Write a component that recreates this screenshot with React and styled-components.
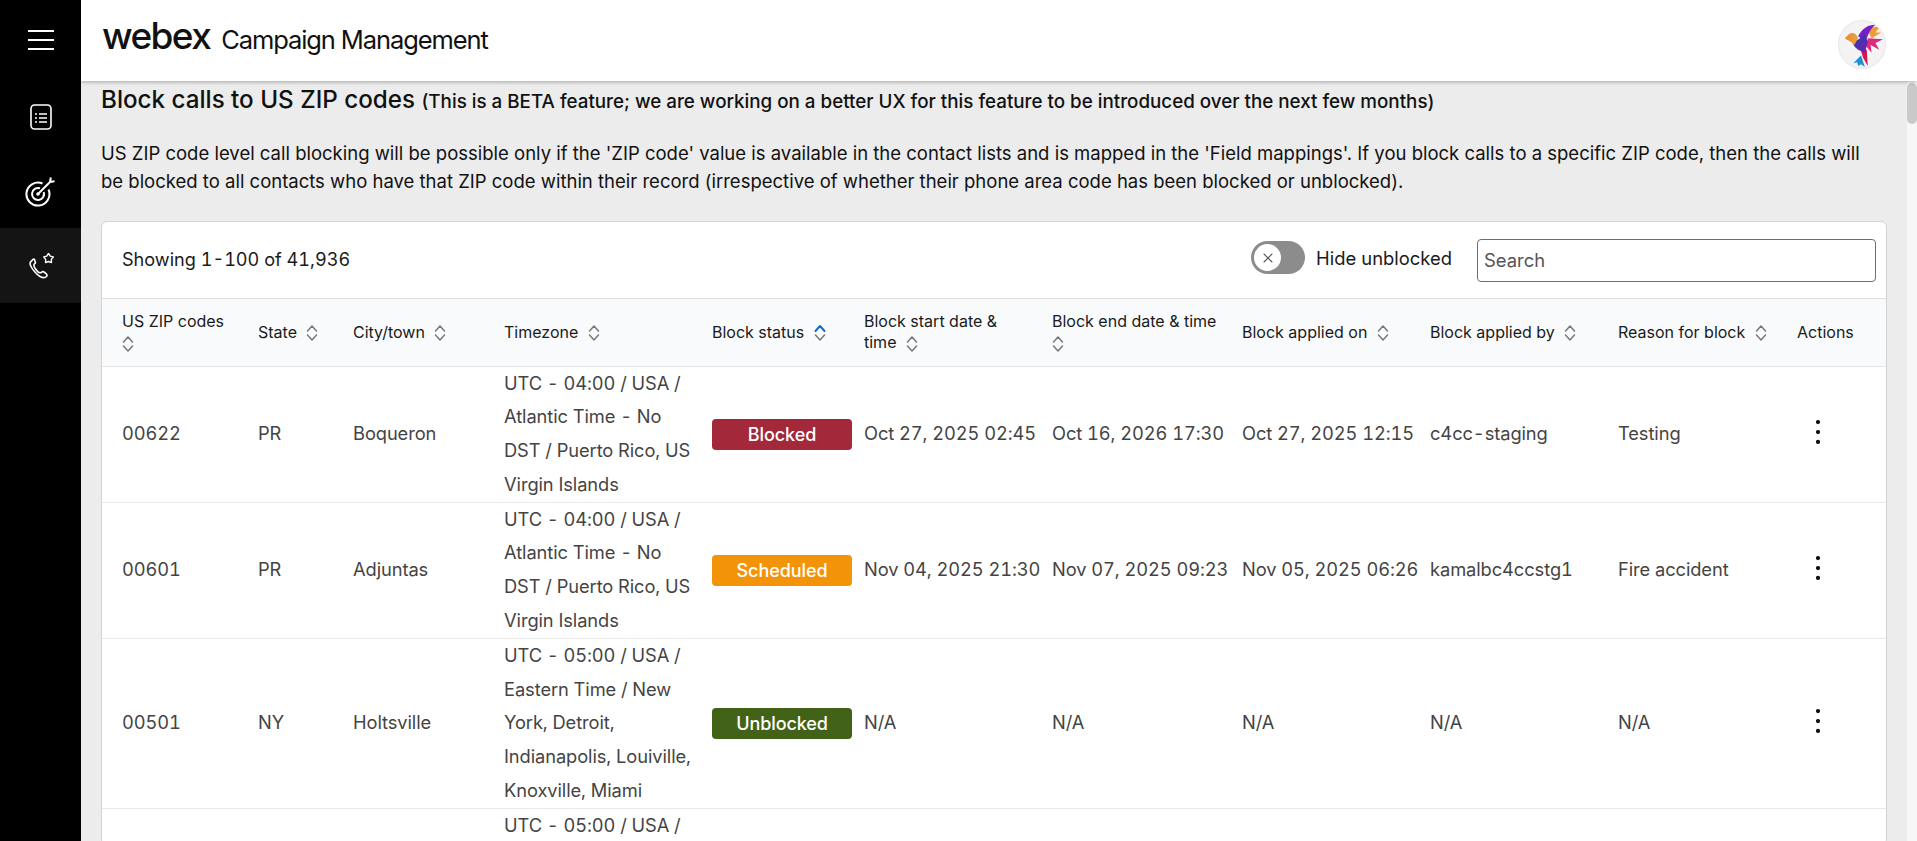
import React from 'react'
import styled, { createGlobalStyle } from 'styled-components'
import { EllipsisVertical, X } from 'lucide-react'

const GlobalStyle = createGlobalStyle`
  html, body { margin: 0; height: 100%; overflow: hidden; }
  body { font-family: Inter, "Noto Sans", sans-serif; color: #1a1a1a; }
  * { box-sizing: border-box; }
`

//#region styles
const Shell = styled.div`
  display: flex;
  height: 841px;
`
const Sidebar = styled.nav`
  width: 81px;
  flex-shrink: 0;
  background: #000;
  display: flex;
  flex-direction: column;
`
const NavItem = styled.div`
  height: ${(p) => p.$height}px;
  display: flex;
  align-items: center;
  justify-content: center;
  background: ${(p) => (p.$active ? '#141414' : 'transparent')};
`
const Column = styled.div`
  flex: 1;
  min-width: 0;
  display: flex;
  flex-direction: column;
`
const Header = styled.header`
  height: 81px;
  flex-shrink: 0;
  background: #fff;
  display: flex;
  align-items: center;
  justify-content: space-between;
  padding: 0 31px 0 21px;
  box-shadow: 0 1px 4px rgba(0, 0, 0, 0.3);
  position: relative;
  z-index: 1;
`
const Brand = styled.div`
  display: flex;
  align-items: baseline;
  gap: 11px;
  color: #111;
  margin-bottom: 10px;
`
const Logo = styled.span`
  font-size: 37px;
  font-weight: 500;
  letter-spacing: -1.6px;
`
const AppName = styled.span`
  font-size: 25.5px;
  font-weight: 400;
  letter-spacing: -1.1px;
`
const Avatar = styled.div`
  width: 48px;
  height: 49px;
  margin-top: 7px;
  border-radius: 50%;
  background: #f3f3f4;
  border: 1px solid #e8e8e8;
  overflow: hidden;
`
const Main = styled.main`
  flex: 1;
  position: relative;
  overflow: hidden;
  background: #ececec;
  padding: 4px 30px 0 20px;
`
const ScrollTrack = styled.div`
  position: absolute;
  top: 0;
  right: 0;
  bottom: 0;
  width: 10px;
  background: #f7f7f7;
`
const ScrollThumb = styled.div`
  height: 41px;
  margin-top: 2px;
  border-radius: 5px;
  background: #c9c9c9;
`
const Title = styled.h1`
  margin: 0;
  font-size: 24.2px;
  font-weight: 500;
  line-height: 30px;
  color: #111;
`
const TitleNote = styled.span`
  font-size: 18.8px;
  font-weight: 500;
`
const Intro = styled.p`
  margin: 22px 0 26px;
  font-size: 18.5px;
  line-height: 28px;
  color: #111;
`
const Card = styled.section`
  background: #fff;
  border: 1px solid #d4d4d4;
  border-radius: 6px;
`
const Toolbar = styled.div`
  height: 77px;
  display: flex;
  align-items: center;
  padding: 0 10px 0 20px;
  border-bottom: 1px solid #dedede;
`
const Showing = styled.div`
  flex: 1;
  font-size: 18.1px;
  font-variant-numeric: tabular-nums;
  margin-bottom: 2px;
`
const ToggleLabel = styled.span`
  font-size: 18.4px;
  margin: 0 25px 5px 11px;
`
const Toggle = styled.div`
  width: 54px;
  height: 33px;
  border-radius: 17px;
  background: #8c8c8c;
  padding: 3px;
  margin-bottom: 5px;
`
const Knob = styled.div`
  width: 27px;
  height: 27px;
  border-radius: 50%;
  background: #fff;
  display: flex;
  align-items: center;
  justify-content: center;
  color: #555;
`
const Search = styled.input`
  width: 399px;
  height: 43px;
  border: 1px solid #6e6e6e;
  border-radius: 4px;
  padding: 0 6px;
  font: 400 18.4px Inter, sans-serif;
  outline: none;
  &::placeholder { color: #555; }
`
const Table = styled.table`
  width: 100%;
  table-layout: fixed;
  border-collapse: collapse;
`
const Th = styled.th`
  background: #f9fafc;
  height: 67px;
  padding: 0 14px 0 6px;
  text-align: left;
  font-size: 16px;
  font-weight: 400;
  line-height: 21px;
  color: #1a1a1a;
  border-bottom: 1px solid #e6e6e6;
  &:first-child { padding-left: 20px; }
`
const Td = styled.td`
  padding: 0 6px;
  font-size: 18.3px;
  letter-spacing: -0.08px;
  line-height: 33.8px;
  color: #444;
  font-variant-numeric: tabular-nums;
  white-space: ${(p) => (p.$wrap ? 'normal' : 'nowrap')};
  border-bottom: 1px solid #e9e9e9;
  vertical-align: middle;
  &:first-child { padding-left: 20px; }
`
/* the space hangs when the icon wraps, so a wrapped icon starts at the cell edge */
const SortGap = styled.span`
  word-spacing: 5px;
`
const SortIcon = styled.svg`
  display: inline-block;
  vertical-align: middle;
`
const Badge = styled.div`
  width: 140px;
  height: 31px;
  border-radius: 4px;
  background: ${(p) => p.$color};
  color: #fff;
  font-size: 18px;
  font-weight: 500;
  line-height: 31px;
  text-align: center;
`
const Kebab = styled.div`
  display: flex;
  padding-left: 4px;
  margin-bottom: 4px;
  color: #111;
`
//#endregion

const widths = [150, 95, 151, 208, 152, 188, 190, 188, 188, 179, 95]

const columns = [
  'US ZIP codes',
  'State',
  'City/town',
  'Timezone',
  'Block status',
  'Block start date & time',
  'Block end date & time',
  'Block applied on',
  'Block applied by',
  'Reason for block',
  'Actions',
]

const atlantic = 'UTC - 04:00 / USA / Atlantic Time - No DST / Puerto Rico, US Virgin Islands'
const eastern = 'UTC - 05:00 / USA / Eastern Time / New York, Detroit, Indianapolis, Louiville, Knoxville, Miami'

const statusColors = { Blocked: '#a2283a', Scheduled: '#f39408', Unblocked: '#426317' }

const rows = [
  ['00622', 'PR', 'Boqueron', atlantic, 'Blocked', 'Oct 27, 2025 02:45', 'Oct 16, 2026 17:30', 'Oct 27, 2025 12:15', 'c4cc-staging', 'Testing'],
  ['00601', 'PR', 'Adjuntas', atlantic, 'Scheduled', 'Nov 04, 2025 21:30', 'Nov 07, 2025 09:23', 'Nov 05, 2025 06:26', 'kamalbc4ccstg1', 'Fire accident'],
  ['00501', 'NY', 'Holtsville', eastern, 'Unblocked', 'N/A', 'N/A', 'N/A', 'N/A', 'N/A'],
]

function Sort({ active }) {
  return (
    <SortIcon width="12" height="18" viewBox="0 0 12 18" fill="none" strokeWidth="1.5" strokeLinecap="round" strokeLinejoin="round">
      <path d="M1.5 7L6 2l4.500 5" stroke={active ? '#0a6fd0' : '#777'} strokeWidth={active ? 2 : 1.5} />
      <path d="M1.5 11L6 16l4.500-5" stroke="#777" />
    </SortIcon>
  )
}

function Bird() {
  return (
    <svg width="46" height="47" viewBox="0 0 48 49">
      <defs>
        <linearGradient id="birdBody" x1="0" y1="0" x2="1" y2="1">
          <stop offset="0" stopColor="#1f3fb5" />
          <stop offset="1" stopColor="#7a1fa8" />
        </linearGradient>
        <linearGradient id="birdHead" x1="0" y1="0" x2="1" y2="0">
          <stop offset="0" stopColor="#f0882a" />
          <stop offset="1" stopColor="#e8a24a" />
        </linearGradient>
      </defs>
      <path d="M30 10C34 6 39 5 42 7L38 12L44 12L34 18Z" fill="#f09a3a" />
      <path d="M30 18L46 19L38 23L42 30L33 25L34 33L28 26Z" fill="#e0287d" />
      <path d="M20 16C24 8 30 4 38 4C33 8 30 14 28 22Z" fill="#7a1fc4" />
      <path d="M23 36L27 48L23 45L20 47L19 43L15 44L19 40Z" fill="#1f8fd0" />
      <path d="M22 28L29 30L30 47L25 38Z" fill="#d5174f" />
      <path d="M14 20C18 22 24 18 26 12L30 22L27 33L20 30C16 27 14 24 14 20Z" fill="url(#birdBody)" />
      <path d="M6 18L10 14C14 11 18 13 20 18L16 25C13 22 10 20 9 20Z" fill="url(#birdHead)" />
    </svg>
  )
}

function App() {
  return (
    <Shell>
      <GlobalStyle />
      <Sidebar>
        <NavItem $height={79}>
          <svg width="26" height="22" viewBox="0 0 26 22" fill="none" stroke="#fff" strokeWidth="2">
            <path d="M0 2h26M0 11h26M0 20h26" />
          </svg>
        </NavItem>
        <NavItem $height={75}>
          <svg width="22" height="26" viewBox="0 0 22 26" fill="none" stroke="#fff">
            <rect x="1" y="1" width="20" height="24" rx="3.5" strokeWidth="1.6" />
            <path d="M5 10h2M9 10h8M5 14h2M9 14h8M5 18h2M9 18h8" strokeWidth="1.6" />
          </svg>
        </NavItem>
        <NavItem $height={74}>
          <svg width="32" height="32" viewBox="0 0 32 32" fill="none" stroke="#fff" strokeWidth="2">
            <path d="M23.500 14.500A11.500 11.500 0 1 1 17.500 8.500" />
            <path d="M18.700 17A6 6 0 1 1 15 13.300" />
            <path d="M13 19L26 6" />
            <path d="M25 7l.8-4.500M25 7l4.500-.8" />
            <circle cx="13" cy="19" r="1.800" fill="#fff" stroke="none" />
          </svg>
        </NavItem>
        <NavItem $height={75} $active>
          <svg width="26" height="26" viewBox="0 0 26 26" fill="none" stroke="#fff" strokeWidth="1.6">
            <path d="M4 7.500c-2 1-2.500 3-1 6s6 8.500 9 10 5 1.500 6.500 0c1-1 .5-2-.5-3l-2-1.500c-1-.7-2-.3-3 .7-1.500.5-4-1.500-6-4.500-1.200-2-1.500-3.500-.5-4.500 1-.5 1-1.700.5-2.700L6.500 6.500c-.7-.7-1.500-.5-2.500 1z" />
            <path d="M20.500 .5L22.260 3.070 25.260 3.950 23.350 6.430 23.440 9.550 20.500 8.500 17.560 9.550 17.650 6.430 15.740 3.950 18.740 3.070Z" strokeWidth="1.400" strokeLinejoin="round" />
          </svg>
        </NavItem>
      </Sidebar>
      <Column>
        <Header>
          <Brand>
            <Logo>webex</Logo>
            <AppName>Campaign Management</AppName>
          </Brand>
          <Avatar>
            <Bird />
          </Avatar>
        </Header>
        <Main>
          <ScrollTrack>
            <ScrollThumb />
          </ScrollTrack>
          <Title>
            Block calls to US ZIP codes{' '}
            <TitleNote>
              (This is a BETA feature; we are working on a better UX for this feature to be introduced over the next few months)
            </TitleNote>
          </Title>
          <Intro>
            US ZIP code level call blocking will be possible only if the 'ZIP code' value is available in the contact lists and is mapped in the 'Field mappings'. If you block calls to a specific ZIP code, then the calls will be blocked to all contacts who have that ZIP code within their record (irrespective of whether their phone area code has been blocked or unblocked).
          </Intro>
          <Card>
            <Toolbar>
              <Showing>Showing 1-100 of 41,936</Showing>
              <Toggle>
                <Knob>
                  <X size={16} strokeWidth={1.6} />
                </Knob>
              </Toggle>
              <ToggleLabel>Hide unblocked</ToggleLabel>
              <Search placeholder="Search" />
            </Toolbar>
            <Table>
              <colgroup>
                {widths.map((w, i) => (
                  <col key={i} width={w} />
                ))}
              </colgroup>
              <thead>
                <tr>
                  {columns.map((c) => (
                    <Th key={c}>
                      {c}
                      {c !== 'Actions' && (
                        <>
                          <SortGap> </SortGap>
                          <Sort active={c === 'Block status'} />
                        </>
                      )}
                    </Th>
                  ))}
                </tr>
              </thead>
              <tbody>
                {rows.map((r) => (
                  <tr key={r[0]}>
                    {r.map((v, i) => (
                      <Td key={i} $wrap={i === 3}>
                        {i === 4 ? <Badge $color={statusColors[v]}>{v}</Badge> : v}
                      </Td>
                    ))}
                    <Td>
                      <Kebab>
                        <EllipsisVertical size={34} strokeWidth={1} fill="currentColor" />
                      </Kebab>
                    </Td>
                  </tr>
                ))}
                <tr>
                  <Td />
                  <Td />
                  <Td />
                  <Td $wrap>UTC - 05:00 / USA /</Td>
                </tr>
              </tbody>
            </Table>
          </Card>
        </Main>
      </Column>
    </Shell>
  )
}

export default App
